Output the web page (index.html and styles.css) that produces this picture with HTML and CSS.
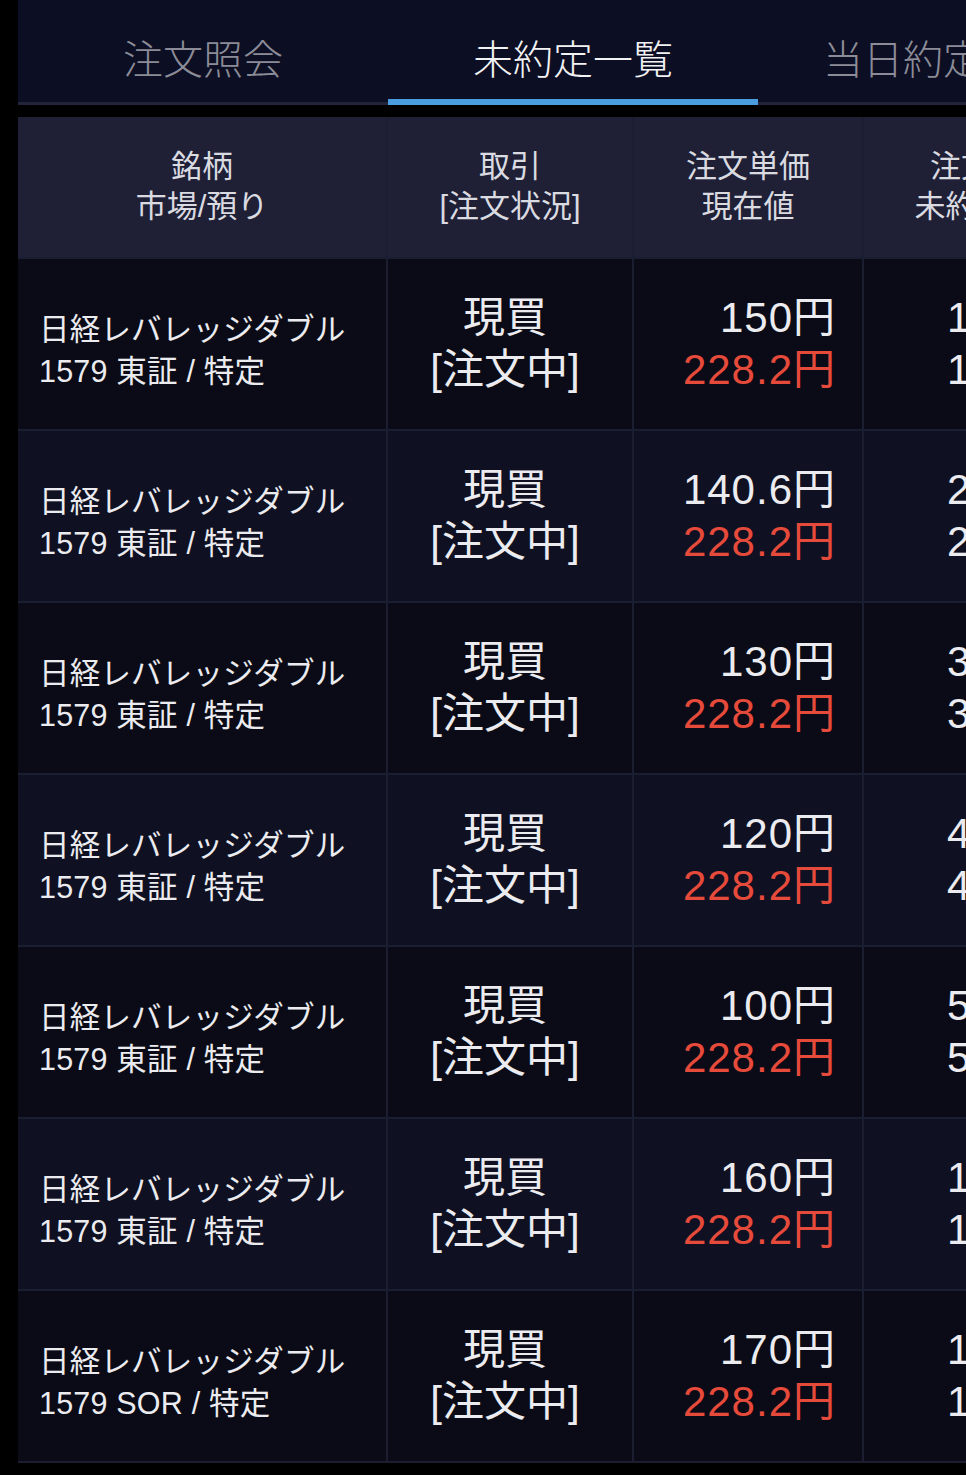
FILE: index.html
```html
<!DOCTYPE html>
<html lang="ja">
<head>
    <meta charset="utf-8">
    <title>未約定一覧</title>
    <link rel="stylesheet" href="styles.css">
</head>
<body>
    <div class="page">
        <!-- タブ -->
        <div class="tabs">
            <div class="tab">注文照会</div>
            <div class="tab active">未約定一覧</div>
            <div class="tab">当日約定一覧</div>
        </div>

        <div class="table">
            <div class="row head">
                <div class="cell"><div>銘柄<br>市場/預り</div></div>
                <div class="cell"><div>取引<br>[注文状況]</div></div>
                <div class="cell"><div>注文単価<br>現在値</div></div>
                <div class="cell"><div>注文数量<br>未約定数量</div></div>
            </div>

            <div class="row">
                <div class="cell name"><div>日経レバレッジダブル<br>1579 東証 / 特定</div></div>
                <div class="cell kind"><div>現買<br>[注文中]</div></div>
                <div class="cell price"><div>150円<br><span class="now">228.2円</span></div></div>
                <div class="cell qty"><div>1,000株<br>1,000株</div></div>
            </div>
            <div class="row alt">
                <div class="cell name"><div>日経レバレッジダブル<br>1579 東証 / 特定</div></div>
                <div class="cell kind"><div>現買<br>[注文中]</div></div>
                <div class="cell price"><div>140.6円<br><span class="now">228.2円</span></div></div>
                <div class="cell qty"><div>2,000株<br>2,000株</div></div>
            </div>
            <div class="row">
                <div class="cell name"><div>日経レバレッジダブル<br>1579 東証 / 特定</div></div>
                <div class="cell kind"><div>現買<br>[注文中]</div></div>
                <div class="cell price"><div>130円<br><span class="now">228.2円</span></div></div>
                <div class="cell qty"><div>3,000株<br>3,000株</div></div>
            </div>
            <div class="row alt">
                <div class="cell name"><div>日経レバレッジダブル<br>1579 東証 / 特定</div></div>
                <div class="cell kind"><div>現買<br>[注文中]</div></div>
                <div class="cell price"><div>120円<br><span class="now">228.2円</span></div></div>
                <div class="cell qty"><div>4,000株<br>4,000株</div></div>
            </div>
            <div class="row">
                <div class="cell name"><div>日経レバレッジダブル<br>1579 東証 / 特定</div></div>
                <div class="cell kind"><div>現買<br>[注文中]</div></div>
                <div class="cell price"><div>100円<br><span class="now">228.2円</span></div></div>
                <div class="cell qty"><div>5,000株<br>5,000株</div></div>
            </div>
            <div class="row alt">
                <div class="cell name"><div>日経レバレッジダブル<br>1579 東証 / 特定</div></div>
                <div class="cell kind"><div>現買<br>[注文中]</div></div>
                <div class="cell price"><div>160円<br><span class="now">228.2円</span></div></div>
                <div class="cell qty"><div>1,000株<br>1,000株</div></div>
            </div>
            <div class="row">
                <div class="cell name"><div>日経レバレッジダブル<br>1579 SOR / 特定</div></div>
                <div class="cell kind"><div>現買<br>[注文中]</div></div>
                <div class="cell price"><div>170円<br><span class="now">228.2円</span></div></div>
                <div class="cell qty"><div>1,000株<br>1,000株</div></div>
            </div>
        </div>
    </div>
</body>
</html>
```

FILE: styles.css
```css
html, body {
    margin: 0;
    padding: 0;
    background-color: #000;
    overflow: hidden;
}

body {
    font-family: "Liberation Sans", "Noto Sans CJK JP", sans-serif;
    color: #ececf0;
}

.page {
    width: 1200px;
    height: 1475px;
    padding-left: 18px;
}

/* タブ */
.tabs {
    display: flex;
    height: 102px;
    background-color: #0c0e23;
    border-bottom: 3px solid #23243a;
}

.tab {
    position: relative;
    width: 370px;
    flex: none;
    display: flex;
    align-items: center;
    justify-content: center;
    padding-top: 12px;
    box-sizing: border-box;
    font-size: 40px;
    font-weight: 300;
    color: #8b8c97;
}

.tab.active {
    color: #f2f2f4;
}

.tab.active::after {
    content: "";
    position: absolute;
    left: 0;
    right: 0;
    bottom: -3px;
    height: 6px;
    background-color: #4a9ee0;
}

/* 一覧 */
.table {
    margin-top: 12px;
    width: 1102px;
    display: flex;
    flex-direction: column;
    gap: 2px;
    padding-bottom: 2px;
    background-color: #1b1d31;
}

.row {
    display: grid;
    grid-template-columns: 368px 244px 228px 256px;
    gap: 2px;
    height: 170px;
}

.cell {
    display: flex;
    align-items: center;
    background-color: #0a0b16;
    box-sizing: border-box;
    font-size: 42px;
    line-height: 52px;
    white-space: nowrap;
}

.row.alt .cell {
    background-color: #0f1122;
}

.row.head {
    height: 140px;
}

.row.head .cell {
    background-color: #1f2035;
    justify-content: center;
    text-align: center;
    font-size: 31px;
    line-height: 40px;
    color: #dadae1;
}

.cell.name {
    padding: 12px 0 0 21px;
    font-size: 30.5px;
    line-height: 42px;
    letter-spacing: 0.2px;
}

.cell.kind {
    justify-content: center;
    text-align: center;
    padding-right: 10px;
}

.cell.price, .cell.qty {
    justify-content: flex-end;
    text-align: right;
    padding-right: 26px;
}

.cell.price {
    letter-spacing: 1px;
}

.now {
    color: #e64a3b;
}
```
